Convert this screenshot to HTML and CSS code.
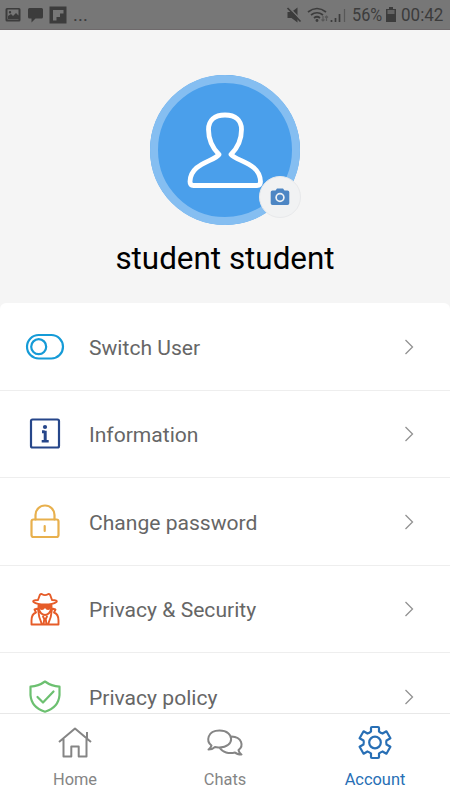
FILE: index.html
```html
<!DOCTYPE html>
<html lang="en">
<head>
<meta charset="utf-8">
<title>Account</title>
<link rel="stylesheet" href="styles.css">
</head>
<body>
<div class="app">
  <header class="status">
    <svg class="status-left" width="69" height="30" viewBox="0 0 69 30">
      <path class="ink" fill-rule="evenodd" d="M7 8h12q1.500 0 1.500 1.500v10.500q0 1.500-1.500 1.500h-12q-1.500 0-1.500-1.500v-10.500q0-1.500 1.500-1.500zM7.500 9.500v10h11v-10zM8 19v-3l3-2 2 2 3-3 2.500 2.500v3.500zM10 11a1.200 1.200 0 1 1 0 2.400a1.200 1.200 0 0 1 0-2.400z"/>
      <path class="ink" d="M29.500 8h12q1.500 0 1.500 1.500v7.500q0 1.500-1.500 1.500h-6l-4 4v-4h-2q-1.500 0-1.500-1.500v-7.500q0-1.500 1.500-1.500z"/>
      <path class="ink" fill-rule="evenodd" d="M49.500 6.500h17v17h-17zM53 10v10.500h3.500v-3.500h3.500v-3.500h3.500v-3.500z"/>
    </svg>
    <span class="dots">...</span>
    <svg class="status-right" width="62" height="30" viewBox="0 0 62 30">
      <path class="ink" d="M2.500 12h4l6-4.500v15l-6-4.500h-4z"/>
      <path d="M3.500 7l13 13.500" stroke="#777" stroke-width="1.500"/><path class="stroke" d="M2.500 8l13 13.500"/>
      <g class="stroke"><path d="M23 12q9-7 18 0M26 15q6-4.500 12 0M29 18q3-2.500 6 0"/></g>
      <circle class="ink" cx="32" cy="20.500" r="1.400"/>
      <path class="faint" d="M38 21v-5M36.500 19.500l1.500 1.500 1.500-1.500M41.500 21v-5M40 17.500l1.500-1.500 1.500 1.500"/>
      <path class="stroke" d="M46.500 22v-2M50.500 22v-4M54.500 22v-8"/><path class="faint" d="M59.500 22v-13"/>
    </svg>
    <span class="percent">56%</span>
    <svg class="battery" width="10" height="30" viewBox="0 0 10 30"><path class="ink" d="M3 7h4v2h3v13h-10v-13h3z"/><path fill="#646464" d="M1.500 10h7v4h-7z"/></svg>
    <span class="clock">00:42</span>
  </header>

  <section class="profile">
    <div class="avatar">
      <svg width="150" height="150" viewBox="0 0 150 150"><path class="person" d="M75 40C64.500 40 58.500 45.500 58.500 54.500C58.500 65 62.500 73 69 79.500C64 86.500 40.500 88 40 106.500Q40 110.500 43.500 110.500H107Q110.500 110.500 110.500 106.500C110 88 87 86.500 81 79.500C87.500 73 91.500 65 91.500 54.500C91.500 45.500 85.500 40 75 40Z"/></svg>
      <span class="camera"><svg width="20" height="18" viewBox="0 0 20 18"><path fill="#4d86c4" d="M2.500 2.500h3l1.500-2h6l1.500 2h3q1.800 0 1.800 1.800v11q0 1.700-1.800 1.700h-15q-1.800 0-1.800-1.700v-11q0-1.800 1.800-1.800z"/><circle cx="10" cy="9.500" r="3.900" fill="none" stroke="#eef2f6" stroke-width="1.700"/></svg></span>
    </div>
    <h1>student student</h1>
  </section>

  <main class="menu">
    <a class="row"><svg class="icon cyan" viewBox="0 0 40 40"><rect x="2" y="8" width="36" height="23.500" rx="11.700"/><circle cx="13.700" cy="19.700" r="7.500"/></svg><span>Switch User</span><svg class="chevron" viewBox="0 0 10 18"><path d="M1.500 2l7 7-7 7"/></svg></a>
    <a class="row"><svg class="icon navy" viewBox="0 0 40 40"><rect x="6" y="5.500" width="28" height="28" rx="1.500"/><circle cx="20" cy="13" r="2.100" fill="#26468a" stroke="none"/><path class="info" d="M17 17.700h2.700M20.200 16.700v11"/><path class="serif" d="M16.700 27.300h7"/></svg><span>Information</span><svg class="chevron" viewBox="0 0 10 18"><path d="M1.500 2l7 7-7 7"/></svg></a>
    <a class="row"><svg class="icon gold" viewBox="0 0 40 40"><rect x="6.500" y="17.500" width="27" height="17.500" rx="2"/><path d="M10.500 17.500v-4.500a9.500 9.500 0 0 1 19 0v4.500M19.700 24v5"/></svg><span>Change password</span><svg class="chevron" viewBox="0 0 10 18"><path d="M1.500 2l7 7-7 7"/></svg></a>
    <a class="row"><svg class="icon orange" viewBox="0 0 40 40"><path d="M13 11L14.800 6Q15.500 4.500 17 5.200Q20 7 23 5.200Q24.500 4.500 25.200 6L27 11M13 11Q7 11 8.500 13Q12 15.500 20 15.500T31.500 13Q33 11 27 11M13.500 16.500V19Q15 25.500 20 26Q25 25.500 26.500 19V16.500M13 19.500L9.500 20.500L11 23.500Q6.500 25 6.500 31.500V35.500H33.500V31.500Q33.500 25 29 23.500L30.500 20.500L27 19.500M13 20Q13.500 28 17 35.500M27 20Q26.500 28 23 35.500M18 27.500L19.300 30L18.500 35.500M22 27.500L20.700 30L21.500 35.500"/><path class="glasses" d="M13.500 16h13v1.500q-.5 3.500-3.500 3.500-2 0-3-2-1 2-3 2-3 0-3.500-3.500z"/></svg><span>Privacy &amp; Security</span><svg class="chevron" viewBox="0 0 10 18"><path d="M1.500 2l7 7-7 7"/></svg></a>
    <a class="row"><svg class="icon green" viewBox="0 0 40 40"><path d="M20 4.500q6.500 4.700 14.500 5.200v8.500q-1 12.500-14.500 16.500-13.500-4-14.500-16.500v-8.500q8-.5 14.500-5.200zM12.500 20l5.500 5.500 10.500-11"/></svg><span>Privacy policy</span><svg class="chevron" viewBox="0 0 10 18"><path d="M1.500 2l7 7-7 7"/></svg></a>
  </main>

  <nav class="tabs">
    <a class="tab"><svg class="tab-icon" viewBox="0 0 40 40"><path d="M4 19l16-13.500 16 13.500M8.500 16v17.500h7.800v-10h7.400v10h7.800v-17.500M32 15.500v-6.500"/></svg><span>Home</span></a>
    <a class="tab"><svg class="tab-icon" viewBox="0 0 40 40"><path d="M6.500 22.500C1 18.500 2 7.500 14.500 7.500C30 7.500 30 24.500 14.500 24.500C12.500 24.500 11 24 10 24Q7.500 26.500 3.500 26.500Q6 25 6.500 22.500ZM26.500 13.500C37 14 39 23 33.500 27Q34 30 36.500 31.500Q32 31.500 30 29.500C24 31 17.500 29.500 14.500 24.500"/></svg><span>Chats</span></a>
    <a class="tab active"><svg class="tab-icon gear" viewBox="0 0 40 40"><path transform="translate(20 19.500)" d="M-4 -11V-14.500Q-4 -15.500 -3 -15.500H3Q4 -15.500 4 -14.500V-11Q5.500 -9.500 7.530 -8.960L11.420 -11.210L15.420 -4.290L11.530 -2.040Q10.800 0 11.530 2.040L15.420 4.290L11.420 11.210L7.530 8.960Q5.500 9.500 4 11V14.500Q4 15.500 3 15.500H-3Q-4 15.500 -4 14.500V11Q-5.500 9.500 -7.530 8.960L-11.420 11.210L-15.420 4.290L-11.530 2.040Q-10.800 0 -11.530 -2.040L-15.420 -4.290L-11.420 -11.210L-7.530 -8.960Q-5.500 -9.500 -4 -11Z"/><circle cx="20" cy="19.500" r="5.800"/></svg><span>Account</span></a>
  </nav>
</div>
</body>
</html>
```

FILE: styles.css
```css
* { box-sizing: border-box; }
body { margin: 0; font-family: Roboto, sans-serif; background: #fff; }
.app { width: 450px; height: 800px; display: flex; flex-direction: column; overflow: hidden; background: #f5f5f5; }
.status { height: 30px; flex: none; display: flex; align-items: center; background: #777; color: #3c3c3c; font-size: 18.500px; border-bottom: 1px solid #6f6a6c; }
.status span { padding-top: 1px; }
.ink { fill: #3c3c3c; }
.stroke { fill: none; stroke: #3c3c3c; stroke-width: 1.7; }
.faint { fill: none; stroke: #585858; stroke-width: 1.2; }
.dots { margin-left: 4px; letter-spacing: .1px; }
.status-right { margin-left: auto; }
.percent { margin-left: 5px; width: 30px; transform: scaleX(.88); transform-origin: left; }
.battery { margin-left: 4px; }
.clock { margin-left: 5px; width: 49px; transform: scaleX(.92); transform-origin: left; }
.profile { height: 273px; flex: none; display: flex; flex-direction: column; align-items: center; padding-top: 45px; }
.avatar { position: relative; width: 150px; height: 150px; border-radius: 50%; background: #4a9feb; }
.avatar::before { content: ""; position: absolute; inset: 0; border: 8px solid #85bef1; border-radius: 50%; }
.avatar > svg { position: relative; display: block; }
.person { fill: none; stroke: #fff; stroke-width: 4.8; stroke-linejoin: round; }
.camera { position: absolute; left: 109px; top: 101px; width: 42px; height: 42px; border-radius: 50%; background: #f1f2f3; border: 1px solid #e8e9eb; display: flex; align-items: center; justify-content: center; }
h1 { margin: 15px 0 0; font-size: 31.400px; line-height: 38px; font-weight: 400; color: #000; }
.menu { flex: 1; min-height: 0; overflow: hidden; background: #fff; border-radius: 6px 6px 0 0; }
.row { height: 87.500px; display: flex; align-items: center; padding: 1px 36px 0 25px; border-bottom: 1px solid #eee; color: #666; font-size: 21.080px; }
.row span { padding-top: 1px; }
.icon { width: 40px; height: 40px; margin-right: 24px; fill: none; stroke: currentColor; stroke-width: 2.2; stroke-linecap: round; stroke-linejoin: round; }
.chevron { width: 10px; height: 18px; margin-left: auto; fill: none; stroke: #929292; stroke-width: 1.3; }
.cyan { color: #159bd7; }
.navy { color: #26468a; }
.info { stroke-width: 3; stroke-linecap: butt; }
.serif { stroke-width: 2.4; stroke-linecap: butt; }
.gold { color: #e8b04d; }
.orange { color: #e65c29; stroke-width: 1.9; }
.glasses { fill: #e65c29; stroke: none; }
.green { color: #6cc070; }
.tabs { height: 87px; flex: none; display: flex; background: #fff; border-top: 1px solid #e8e8e8; }
.tab { flex: 1; display: flex; flex-direction: column; align-items: center; padding-top: 9px; color: #858585; font-size: 16.400px; line-height: 20px; }
.tab-icon { width: 40px; height: 40px; margin-bottom: 7px; fill: none; stroke: currentColor; stroke-width: 2; stroke-linejoin: round; }
.gear { stroke-width: 2.2; }
.active { color: #286fb5; }
```
